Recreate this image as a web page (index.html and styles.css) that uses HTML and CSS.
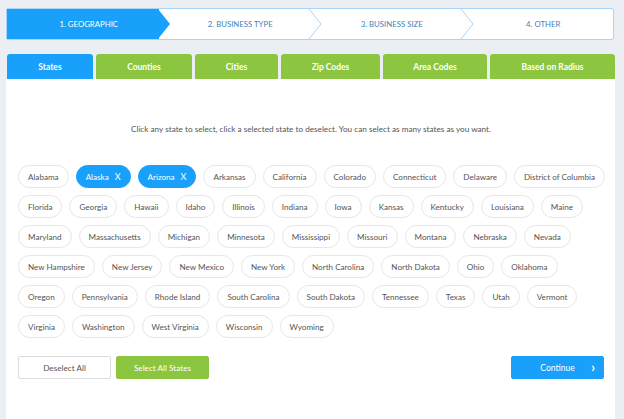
FILE: index.html
```html
<!DOCTYPE html>
<html>
<head>
<meta charset="utf-8">
<link rel="stylesheet" href="styles.css">
</head>
<body>
<div class="wrap">
  <div class="stepper">
    <div class="step active">1. GEOGRAPHIC
      <svg class="chev" viewBox="0 0 13 31" preserveAspectRatio="none"><polygon points="0,0 12,15.5 0,31" fill="#18a0fb"/></svg>
    </div>
    <div class="step">2. BUSINESS TYPE
      <svg class="chev" viewBox="0 0 13 31" preserveAspectRatio="none"><polyline points="0,0 12,15.5 0,31" fill="#fff" stroke="#a8d5f7" stroke-width="1"/></svg>
    </div>
    <div class="step">3. BUSINESS SIZE
      <svg class="chev" viewBox="0 0 13 31" preserveAspectRatio="none"><polyline points="0,0 12,15.5 0,31" fill="#fff" stroke="#a8d5f7" stroke-width="1"/></svg>
    </div>
    <div class="step">4. OTHER</div>
  </div>

  <div class="tabs">
    <div class="tab tab-on">States</div>
    <div class="tab">Counties</div>
    <div class="tab">Cities</div>
    <div class="tab">Zip Codes</div>
    <div class="tab">Area Codes</div>
    <div class="tab">Based on Radius</div>
  </div>

  <div class="panel">
    <p class="hint">Click any state to select, click a selected state to deselect. You can select as many states as you want.</p>
    <div class="pills">
      <div class="row">
        <span class="pill">Alabama</span>
        <span class="pill sel">Alaska<span class="x">X</span></span>
        <span class="pill sel">Arizona<span class="x">X</span></span>
        <span class="pill">Arkansas</span>
        <span class="pill">California</span>
        <span class="pill">Colorado</span>
        <span class="pill">Connecticut</span>
        <span class="pill">Delaware</span>
        <span class="pill">District of Columbia</span>
      </div>
      <div class="row">
        <span class="pill">Florida</span>
        <span class="pill">Georgia</span>
        <span class="pill">Hawaii</span>
        <span class="pill">Idaho</span>
        <span class="pill">Illinois</span>
        <span class="pill">Indiana</span>
        <span class="pill">Iowa</span>
        <span class="pill">Kansas</span>
        <span class="pill">Kentucky</span>
        <span class="pill">Louisiana</span>
        <span class="pill">Maine</span>
      </div>
      <div class="row">
        <span class="pill">Maryland</span>
        <span class="pill">Massachusetts</span>
        <span class="pill">Michigan</span>
        <span class="pill">Minnesota</span>
        <span class="pill">Mississippi</span>
        <span class="pill">Missouri</span>
        <span class="pill">Montana</span>
        <span class="pill">Nebraska</span>
        <span class="pill">Nevada</span>
      </div>
      <div class="row">
        <span class="pill">New Hampshire</span>
        <span class="pill">New Jersey</span>
        <span class="pill">New Mexico</span>
        <span class="pill">New York</span>
        <span class="pill">North Carolina</span>
        <span class="pill">North Dakota</span>
        <span class="pill">Ohio</span>
        <span class="pill">Oklahoma</span>
      </div>
      <div class="row">
        <span class="pill">Oregon</span>
        <span class="pill">Pennsylvania</span>
        <span class="pill">Rhode Island</span>
        <span class="pill">South Carolina</span>
        <span class="pill">South Dakota</span>
        <span class="pill">Tennessee</span>
        <span class="pill">Texas</span>
        <span class="pill">Utah</span>
        <span class="pill">Vermont</span>
      </div>
      <div class="row">
        <span class="pill">Virginia</span>
        <span class="pill">Washington</span>
        <span class="pill">West Virginia</span>
        <span class="pill">Wisconsin</span>
        <span class="pill">Wyoming</span>
      </div>
    </div>
    <div class="actions">
      <button class="btn btn-light">Deselect All</button>
      <button class="btn btn-green">Select All States</button>
      <button class="btn btn-blue">Continue<span class="arrow">›</span></button>
    </div>
  </div>
</div>
</body>
</html>
```

FILE: styles.css
```css
* { box-sizing: border-box; }
html, body { margin: 0; padding: 0; }
body {
  background: #ebeef2;
  font-family: Lato, "Open Sans", sans-serif;
  color: #555;
  height: 419px;
  overflow: hidden;
}
.wrap {
  margin-left: 6px;
  width: 609px;
  padding-top: 8px;
}
.stepper {
  display: flex;
  height: 32px;
  border: 1px solid #a8d5f7;
  border-radius: 2px;
  background: #fff;
  width: 608px;
}
.step {
  position: relative;
  flex: 1;
  display: flex;
  align-items: center;
  justify-content: center;
  padding-left: 12px;
  font-size: 7.8px;
  color: #3f7fb6;
}
.step.active {
  background: #18a0fb;
  color: #fff;
}
.chev {
  position: absolute;
  right: -12px;
  top: 0;
  width: 13px;
  height: 100%;
  z-index: 2;
}
.tabs {
  display: grid;
  grid-template-columns: 86px 96px 83px 99px 104px 1fr;
  gap: 3px;
  margin-top: 14px;
  padding-left: 1px;
}
.tab {
  height: 25px;
  background: #8cc540;
  color: #fff;
  font-weight: 700;
  font-size: 8.5px;
  display: flex;
  align-items: center;
  justify-content: center;
  border-radius: 3px 3px 0 0;
}
.tab-on { background: #18a0fb; }
.panel {
  background: #fff;
  height: 360px;
  padding: 1px 11px 0 12px;
}
.hint {
  margin: 43px 0 0 0;
  text-align: center;
  font-size: 8.2px;
  line-height: 12px;
  color: #555;
}
.pills {
  margin-top: 30px;
  display: flex;
  flex-direction: column;
  gap: 7px;
}
.row {
  display: flex;
  gap: 7px;
}
.pill {
  height: 23px;
  padding: 0 9px;
  border: 1px solid #e6e6e6;
  border-radius: 12px;
  font-size: 8.1px;
  display: flex;
  align-items: center;
  color: #555;
  white-space: nowrap;
}
.pill.sel {
  background: #18a0fb;
  border-color: #18a0fb;
  color: #fff;
}
.x { margin-left: 6px; font-size: 9px; }
.actions {
  display: flex;
  gap: 5px;
  margin-top: 18px;
}
.btn {
  height: 23px;
  font-family: inherit;
  font-size: 8.2px;
  border-radius: 2px;
  cursor: pointer;
  width: 93px;
}
.btn-light {
  background: #fff;
  border: 1px solid #dcdcdc;
  color: #555;
}
.btn-green {
  background: #8cc540;
  border: 1px solid #8cc540;
  color: #fff;
}
.btn-blue {
  margin-left: auto;
  background: #18a0fb;
  border: 1px solid #18a0fb;
  color: #fff;
  position: relative;
  font-size: 8.5px;
}
.arrow {
  position: absolute;
  right: 8px;
  top: 50%;
  transform: translateY(-55%);
  font-size: 13px;
  font-weight: 700;
}
```
